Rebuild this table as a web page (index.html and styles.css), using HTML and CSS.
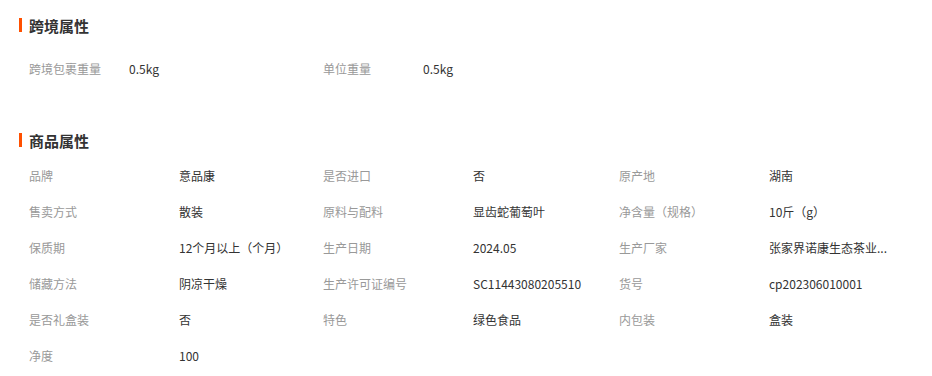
FILE: index.html
```html
<!DOCTYPE html>
<html lang="zh-CN">
<head>
<meta charset="utf-8">
<link rel="stylesheet" href="styles.css">
</head>
<body>
<section class="section s1">
  <h2 class="title">跨境属性</h2>
  <div class="grid">
    <div class="item"><span class="label short">跨境包裹重量</span><span class="value">0.5kg</span></div>
    <div class="item"><span class="label short">单位重量</span><span class="value">0.5kg</span></div>
  </div>
</section>
<section class="section s2">
  <h2 class="title">商品属性</h2>
  <div class="grid">
    <div class="item"><span class="label">品牌</span><span class="value">意品康</span></div>
    <div class="item"><span class="label">是否进口</span><span class="value">否</span></div>
    <div class="item"><span class="label">原产地</span><span class="value">湖南</span></div>
    <div class="item"><span class="label">售卖方式</span><span class="value">散装</span></div>
    <div class="item"><span class="label">原料与配料</span><span class="value">显齿蛇葡萄叶</span></div>
    <div class="item"><span class="label">净含量（规格）</span><span class="value">10斤（g）</span></div>
    <div class="item"><span class="label">保质期</span><span class="value">12个月以上（个月）</span></div>
    <div class="item"><span class="label">生产日期</span><span class="value">2024.05</span></div>
    <div class="item"><span class="label">生产厂家</span><span class="value">张家界诺康生态茶业...</span></div>
    <div class="item"><span class="label">储藏方法</span><span class="value">阴凉干燥</span></div>
    <div class="item"><span class="label">生产许可证编号</span><span class="value">SC11443080205510</span></div>
    <div class="item"><span class="label">货号</span><span class="value">cp202306010001</span></div>
    <div class="item"><span class="label">是否礼盒装</span><span class="value">否</span></div>
    <div class="item"><span class="label">特色</span><span class="value">绿色食品</span></div>
    <div class="item"><span class="label">内包装</span><span class="value">盒装</span></div>
    <div class="item"><span class="label">净度</span><span class="value">100</span></div>
  </div>
</section>
</body>
</html>
```
FILE: styles.css
```css
* { box-sizing: border-box; }
body {
  margin: 0;
  background: #fff;
  font-family: "Microsoft YaHei", "Noto Sans CJK SC", "Noto Sans", sans-serif;
  font-size: 12px;
  color: #333;
}
.section { padding-left: 19px; }
.s1 { padding-top: 13px; height: 128px; }
.title {
  margin: 0;
  display: flex;
  align-items: center;
  gap: 7px;
  height: 24px;
  font-size: 15px;
  font-weight: bold;
  color: #333;
}
.title::before {
  content: "";
  width: 3px;
  height: 14px;
  background: #ff5000;
}
.grid {
  display: grid;
  grid-template-columns: 294px 296px 296px;
  padding-left: 10px;
}
.s1 .grid { margin-top: 13px; }
.s2 .grid { margin-top: 5px; }
.item {
  display: flex;
  height: 36px;
  align-items: center;
  white-space: nowrap;
}
.label {
  width: 150px;
  flex: none;
  color: #999;
}
.label.short { width: 100px; }
.value {
  color: #333;
}
```
